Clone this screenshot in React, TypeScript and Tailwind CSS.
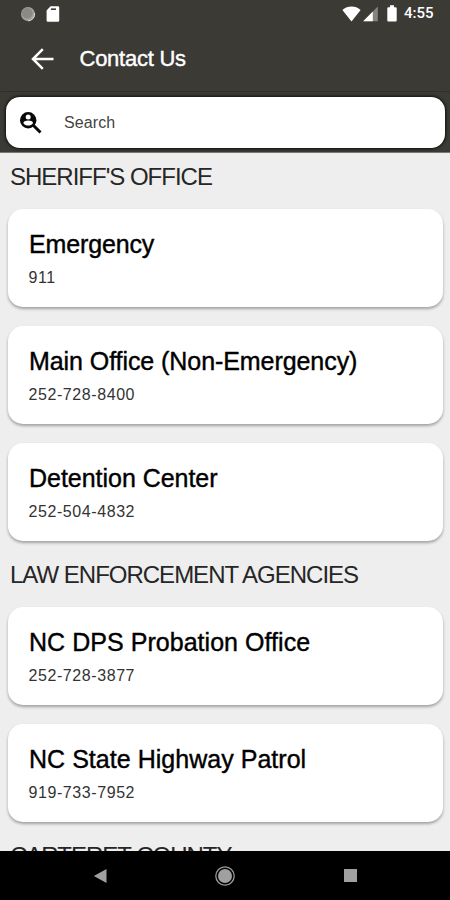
import type { ReactNode } from 'react';

type Contact = { name: string; phone: string; tracking: string };

const sheriff: Contact[] = [
  { name: 'Emergency', phone: '911', tracking: 'tracking-[-0.15px]' },
  {
    name: 'Main Office (Non-Emergency)',
    phone: '252-728-8400',
    tracking: 'tracking-[-0.07px]',
  },
  {
    name: 'Detention Center',
    phone: '252-504-4832',
    tracking: 'tracking-[-0.03px]',
  },
];

const agencies: Contact[] = [
  {
    name: 'NC DPS Probation Office',
    phone: '252-728-3877',
    tracking: 'tracking-[0.04px]',
  },
  {
    name: 'NC State Highway Patrol',
    phone: '919-733-7952',
    tracking: 'tracking-[0.03px]',
  },
];

function StatusBar() {
  return (
    <div className="flex h-[27px] items-center pl-5 pr-[16px]">
      <svg width="16" height="16" viewBox="0 0 16 16">
        <circle cx="8" cy="8" r="7" fill="#a3a3a0" />
        <circle cx="7.2" cy="7.2" r="5.4" fill="#8a8a87" />
        <path d="M14.6 7A7 7 0 0 1 8 15" fill="none" stroke="#d8d8d6" />
      </svg>
      <svg className="ml-[10px]" width="14" height="16" viewBox="0 0 14 16">
        <path
          d="M4.5 .2H12a1.2 1.2 0 0 1 1.2 1.2V14.6a1.2 1.2 0 0 1-1.2 1.2H1.8A1.2 1.2 0 0 1 .6 14.6V4.500z"
          fill="#fff"
        />
        <path d="M5 3.2h5" stroke="#3b3a35" strokeWidth="1.6" />
      </svg>
      <svg className="ml-auto" width="19" height="16" viewBox="0 0 19 16">
        <path d="M9.500 15.500.4 4C5.500-.6 13.500-.6 18.600 4z" fill="#fff" />
      </svg>
      <svg className="ml-[2px]" width="15" height="16" viewBox="0 0 15 16">
        <path d="M.2 15.3 14.8.5v14.8z" fill="#85847f" />
        <path d="M.2 15.3 9.8 5.6v9.700z" fill="#fff" />
      </svg>
      <svg className="ml-[9px]" width="10" height="17" viewBox="0 0 10 17">
        <path
          d="M3 .3h4v1.9h1.7a1 1 0 0 1 1 1v12.3a1 1 0 0 1-1 1H1.3a1 1 0 0 1-1-1V3.2a1 1 0 0 1 1-1H3z"
          fill="#fff"
        />
      </svg>
      <span className="ml-[7px] w-[30px] whitespace-nowrap font-['Roboto'] text-[15px] font-medium leading-none text-white">
        4:55
      </span>
    </div>
  );
}

function SectionTitle({ children }: { children: ReactNode }) {
  return (
    <h2 className="whitespace-nowrap pl-[10px] text-[24px] leading-[28px] tracking-[-1px] text-[#262626]">
      {children}
    </h2>
  );
}

function ContactCard({ name, phone, tracking }: Contact) {
  return (
    <div className="h-[98px] rounded-[15px] bg-white pl-[21px] pt-[20px] shadow-[0_2px_3px_rgba(0,0,0,0.32)]">
      <div
        className={`${tracking} whitespace-nowrap text-[25px] leading-[31px] text-black [-webkit-text-stroke:0.4px_#000]`}
      >
        {name}
      </div>
      <div className="-ml-[0.5px] mt-[7px] text-[16px] leading-[21px] tracking-[0.58px] text-[#333]">
        {phone}
      </div>
    </div>
  );
}

function CardList({ items }: { items: Contact[] }) {
  return (
    <div className="flex flex-col gap-[19px] pl-2 pr-[7px]">
      {items.map((c) => (
        <ContactCard key={c.name} {...c} />
      ))}
    </div>
  );
}

export default function App() {
  return (
    <div className="flex h-[900px] w-[450px] flex-col overflow-hidden bg-[#eee] font-['Liberation_Sans',sans-serif]">
      <header className="h-[153px] shrink-0 border-b border-[#77767a] bg-[#3b3a35]">
        <StatusBar />
        <div className="flex h-[64px] items-center pl-[31px]">
          <svg width="23" height="22" viewBox="0 0 23 22">
            <path
              d="M22.500 11H2M11.800 1.200 2 11l9.800 9.800"
              fill="none"
              stroke="#fff"
              strokeWidth="2.5"
            />
          </svg>
          <h1 className="ml-[25.5px] text-[22px] leading-[26px] tracking-[-0.25px] text-white [-webkit-text-stroke:0.4px_#fff]">
            Contact Us
          </h1>
        </div>
        <div className="h-[61px] border-t border-[#302f2b] pl-[6px] pr-[5px] pt-[5px]">
          <div className="flex h-[51px] items-center rounded-[14px] bg-white pl-[13px] shadow-[0_0_3px_1px_rgba(0,0,0,0.75)]">
            <svg width="24" height="24" viewBox="0 0 24 24">
              <circle cx="9.2" cy="9.2" r="8.2" fill="#080808" />
              <circle cx="9.2" cy="6" r="2.5" fill="#fff" />
              <path d="M4.3 11.9c1-3.200 8.800-3.200 9.800 0-2.200 3.500-7.600 3.500-9.800 0z" fill="#fff" />
              <path d="m14.500 14.500 7 7" stroke="#080808" strokeWidth="3" />
            </svg>
            <span className="ml-[21px] text-base tracking-[0.1px] text-[#444]">Search</span>
          </div>
        </div>
      </header>

      <main className="min-h-0 flex-1 overflow-hidden pt-[10px]">
        <SectionTitle>SHERIFF'S OFFICE</SectionTitle>
        <div className="mt-[18px]">
          <CardList items={sheriff} />
        </div>
        <div className="mt-[20px]">
          <SectionTitle>LAW ENFORCEMENT AGENCIES</SectionTitle>
        </div>
        <div className="mt-[18px]">
          <CardList items={agencies} />
        </div>
        <div className="mt-[20px]">
          <SectionTitle>CARTERET COUNTY</SectionTitle>
        </div>
      </main>

      <nav className="flex h-[49px] shrink-0 items-center bg-black pl-[93px]">
        <svg width="14" height="16" viewBox="0 0 14 16">
          <path d="M.8 8 13.500 1v14z" fill="#a0a0a0" />
        </svg>
        <svg className="ml-[108px]" width="20" height="20" viewBox="0 0 20 20">
          <circle cx="10" cy="10" r="9.2" fill="none" stroke="#999" strokeWidth="1.3" />
          <circle cx="10" cy="10" r="7" fill="#a0a0a0" />
        </svg>
        <div className="ml-[109px] h-[13px] w-[13px] bg-[#a0a0a0]" />
      </nav>
    </div>
  );
}
